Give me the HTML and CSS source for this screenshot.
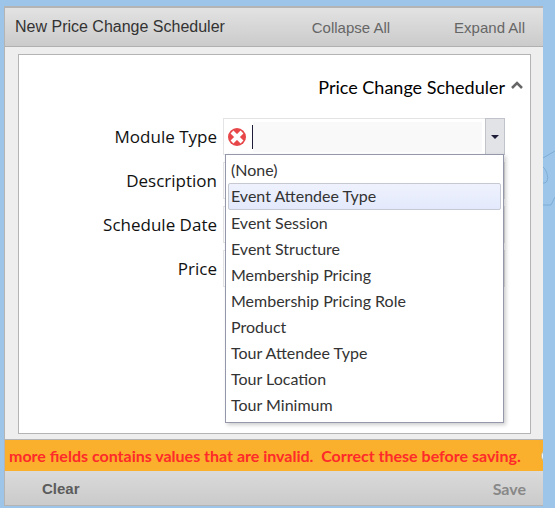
FILE: index.html
```html
<!DOCTYPE html>
<html lang="en">
<head>
  <meta charset="UTF-8">
  <title>New Price Change Scheduler</title>
  <link rel="stylesheet" href="styles.css">
</head>
<body>

<svg class="backdrop" width="12" height="60" viewBox="0 0 12 60" fill="none" stroke="#7fadd6" stroke-width="1">
  <path d="M0 8 L12 1" />
  <path d="M0 17 C3 19 6 27 4 31 C3 33 1 33 0 33" />
  <path d="M0 55 H8 L12 47" />
</svg>

<div class="dialog">
  <header class="titlebar">
    <h1>New Price Change Scheduler</h1>
    <button type="button" class="link-btn">Collapse All</button>
    <button type="button" class="link-btn">Expand All</button>
  </header>

  <div class="content">
    <form class="panel" id="schedulerForm">
      <button type="button" class="section-toggle">
        Price Change Scheduler
        <svg width="12" height="9" viewBox="0 0 12 9" fill="none" stroke="#666" stroke-width="2.5">
          <path d="M1 7 L6 2 L11 7" />
        </svg>
      </button>

      <div class="row">
        <label for="moduleType">Module Type</label>
        <div class="field combo">
          <svg class="error-icon" width="18" height="18" viewBox="0 0 18 18">
            <circle cx="9" cy="9" r="9" fill="#e8474a" />
            <path d="M4 4 L14 14 M14 4 L4 14" stroke="#fff" stroke-width="4" />
          </svg>
          <span class="caret"></span>
          <input type="text" id="moduleType" class="combo-input">
          <button type="button" class="combo-btn" aria-label="Show module types">
            <svg width="8" height="4" viewBox="0 0 8 4"><path d="M0 0 H8 L4 4 Z" fill="#1e1e38" /></svg>
          </button>
          <select class="combo-list" size="10" aria-label="Module Type">
            <option>(None)</option>
            <option class="active">Event Attendee Type</option>
            <option>Event Session</option>
            <option>Event Structure</option>
            <option>Membership Pricing</option>
            <option>Membership Pricing Role</option>
            <option>Product</option>
            <option>Tour Attendee Type</option>
            <option>Tour Location</option>
            <option>Tour Minimum</option>
          </select>
        </div>
      </div>

      <div class="row">
        <label for="description">Description</label>
        <input type="text" id="description" class="field">
      </div>
      <div class="row">
        <label for="scheduleDate">Schedule Date</label>
        <input type="text" id="scheduleDate" class="field">
      </div>
      <div class="row">
        <label for="price">Price</label>
        <input type="text" id="price" class="field">
      </div>
    </form>
  </div>

  <div class="warning">
    <span>more fields contains values that are invalid.&nbsp; Correct these before saving.</span>
    <i class="warning-dot"></i>
  </div>

  <footer class="actions">
    <button type="reset" form="schedulerForm" class="clear-btn">Clear</button>
    <button type="submit" form="schedulerForm" class="save-btn">Save</button>
  </footer>
</div>

</body>
</html>
```
FILE: styles.css
```css
* {
  box-sizing: border-box;
}

body {
  margin: 0;
  padding: 6px 12px 2px 4px;
  background: #9cc5e9;
  font-family: Lato, "Liberation Sans", sans-serif;
}

button {
  border: 0;
  padding: 0;
  background: none;
  font-family: inherit;
}

.backdrop {
  position: absolute;
  top: 150px;
  right: 0;
}

.dialog {
  border: 1px solid #b4b4b4;
  border-top-width: 2px;
  border-right: 0;
  background: #eee;
}

.titlebar {
  display: flex;
  align-items: center;
  height: 39px;
  padding: 0 18px 0 10px;
  border-bottom: 1px solid #b0b0b0;
  background: linear-gradient(#e2e2e2, #cbcbcb);
  font-family: "Liberation Sans", Arial, sans-serif;
}

.titlebar h1 {
  flex: 1;
  margin: 0;
  font-size: 16px;
  font-weight: normal;
  color: #333;
}

.link-btn {
  font-size: 15px;
  color: #666;
}

.link-btn + .link-btn {
  margin-left: 64px;
}

.content {
  padding: 7px 12px 5px 13px;
}

.panel {
  min-height: 380px;
  padding: 18px 25px 0 8px;
  border: 1px solid #b4b4b4;
  background: #fff;
}

.section-toggle {
  display: flex;
  align-items: center;
  gap: 6px;
  margin: 0 -18px 17px auto;
  font-size: 18px;
  line-height: 28px;
  color: #000;
}

.section-toggle svg {
  margin-bottom: 4px;
}

.row {
  display: flex;
  align-items: center;
  gap: 6px;
  margin-bottom: 7px;
}

.row label {
  flex: 0 0 190px;
  text-align: right;
  font-family: "Open Sans", sans-serif;
  font-size: 17px;
  color: #111;
}

.field {
  flex: 1;
  min-width: 0;
  height: 37px;
  border: 1px solid #e4e4e6;
  background: #fff;
}

.combo {
  position: relative;
  display: flex;
  align-items: center;
  padding-left: 4px;
}

.caret {
  width: 1px;
  height: 24px;
  margin-left: 6px;
  background: #1e1e38;
}

.combo-input {
  flex: 1;
  min-width: 0;
  height: 30px;
  margin-right: 4px;
  border: 0;
  background: #f9f9f9;
}

.combo-btn {
  display: flex;
  align-items: center;
  justify-content: center;
  align-self: stretch;
  width: 20px;
  margin: -1px;
  border: 1px solid #c0c3ca;
  background: #e1e3e7;
}

.combo-list {
  position: absolute;
  top: 35px;
  left: 1px;
  right: 0;
  z-index: 1;
  height: 269px;
  padding: 2px;
  border: 1px solid #9597aa;
  border-radius: 0;
  outline: 0;
  overflow: hidden;
  background: #fff;
  box-shadow: 2px 2px 4px rgba(0, 0, 0, 0.2);
  font-family: Lato, sans-serif;
  font-size: 16px;
  color: #333;
}

.combo-list option {
  min-height: 26px;
  padding: 3px 3px 0;
}

.combo-list .active {
  min-height: 27px;
  padding: 2px 2px 0;
  border: 1px solid #c6c8d2;
  border-radius: 2px;
  background: linear-gradient(#eff2fd, #e3e9fc);
}

.warning {
  display: flex;
  align-items: center;
  gap: 20px;
  height: 32px;
  padding-left: 4px;
  overflow: hidden;
  border-top: 1px solid #b4b4b4;
  background: #fab02c;
  font-size: 16px;
  font-weight: bold;
  color: #ff2a2a;
  white-space: nowrap;
}

.warning-dot {
  flex: none;
  width: 16px;
  height: 16px;
  border: 1px solid #c9b88a;
  border-radius: 50%;
  background: #fff;
}

.actions {
  display: flex;
  align-items: center;
  justify-content: space-between;
  height: 34px;
  padding: 0 17px 0 37px;
  background: linear-gradient(#dadada, #cbcbcb);
}

.clear-btn {
  font-family: "Liberation Sans", Arial, sans-serif;
  font-size: 15px;
  font-weight: bold;
  color: #5c5c5c;
}

.save-btn {
  font-size: 16px;
  font-weight: bold;
  color: #888;
}
```
